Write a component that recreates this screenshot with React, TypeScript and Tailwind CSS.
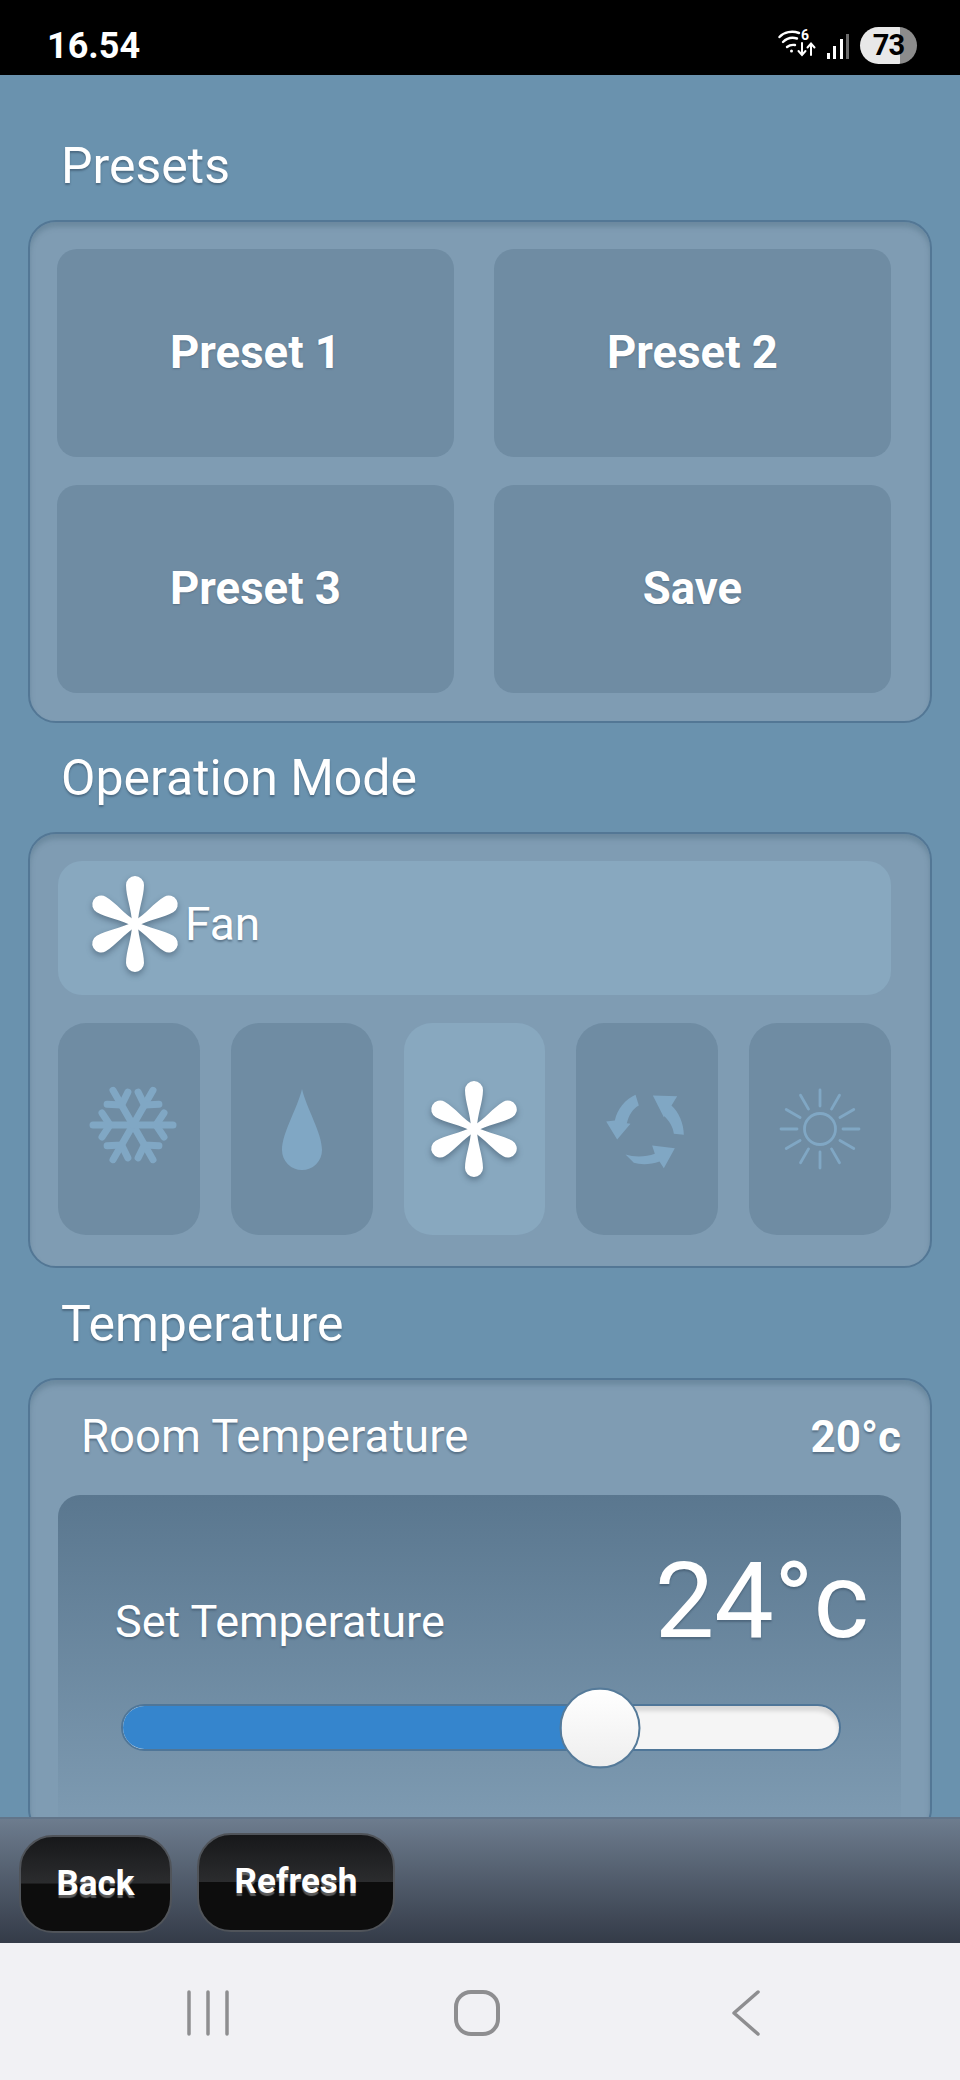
const value = 24;
const minTemp = 16;
const maxTemp = 28;

const headingClass =
  "mb-[26px] pl-[61px] text-[50px] leading-[55px] text-white [text-shadow:0_2px_2px_rgba(40,60,80,0.45)]";
const panelClass =
  "mx-[28px] rounded-[28px] border-2 border-[#537795] bg-[#7f9cb3] shadow-[inset_0_5px_5px_rgba(85,115,135,0.45)]";

function FanIcon() {
  return (
    <svg width="100" height="100" viewBox="-50 -50 100 100" className="drop-shadow-[0_3px_3px_rgba(40,60,80,0.45)]">
      {[0, 60, 120, 180, 240, 300].map((angle) => (
        <path
          key={angle}
          transform={`rotate(${angle})`}
          d="M-3 0 C-3 -14 -9 -27 -9 -39 A9 9 0 0 1 9 -39 C9 -27 3 -14 3 0 Z"
          fill="#fff"
        />
      ))}
      <circle r="5" fill="#fff" />
    </svg>
  );
}

function SnowflakeIcon() {
  return (
    <svg width="100" height="100" viewBox="-54 -46 100 100" fill="none" stroke="#80a7c4" strokeWidth="7" strokeLinecap="round">
      {[0, 60, 120, 180, 240, 300].map((angle) => (
        <g key={angle} transform={`rotate(${angle})`}>
          <path d="M0 0 L40 0" />
          <path d="M23 0 L31 -12 M23 0 L31 12" />
        </g>
      ))}
    </svg>
  );
}

function DropIcon() {
  return (
    <svg width="40" height="81" viewBox="0 0 40 81">
      <path d="M20 0 C24 18 40 44 40 61 A20 20 0 0 1 0 61 C0 44 16 18 20 0 Z" fill="#80a7c4" />
    </svg>
  );
}

function CycleIcon() {
  return (
    <svg width="105" height="105" viewBox="-1.500 4.500 315 315" fill="#80a7c4">
      <path d="M265 178 L235 175 C233 155 222 137 207 122 L205 125 L172 60 L245 62 L228 90 C250 110 265 145 265 178 Z" />
      <path d="M120 58 L130 90 C112 100 100 118 94 143 L105 145 L65 192 L32 138 L58 135 C65 100 90 72 120 58 Z" />
      <path d="M90 237 C115 245 150 245 178 235 L170 210 L238 218 L205 278 L192 258 C165 268 135 268 115 262 Z" />
    </svg>
  );
}

function SunIcon() {
  return (
    <svg width="84" height="84" viewBox="-42 -42 84 84" fill="none" stroke="#80a7c4" strokeLinecap="round">
      <circle r="15.500" strokeWidth="2.800" />
      {[0, 30, 60, 90, 120, 150, 180, 210, 240, 270, 300, 330].map((angle) => (
        <path key={angle} transform={`rotate(${angle})`} d="M0 -23 L0 -39" strokeWidth="2.800" />
      ))}
    </svg>
  );
}

function WifiIcon() {
  return (
    <svg width="40" height="36" viewBox="0 0 40 36" fill="none" stroke="#fff" strokeLinecap="round">
      <path d="M1.500 9 C6 4 14 2.500 21 5" strokeWidth="2.400" />
      <path d="M5 14 C9 10 14 9 19 10.500" strokeWidth="2.400" />
      <path d="M9 19 C11.500 17 14 16.500 17 17" strokeWidth="2.400" />
      <circle cx="13.500" cy="23" r="1.500" fill="#fff" stroke="none" />
      <text x="23" y="12" fontSize="14" fontWeight="700" fontFamily="Roboto, sans-serif" fill="#fff" stroke="none">6</text>
      <path d="M24 15 V26 M20.500 23 L24 27 L27.500 23" strokeWidth="2" />
      <path d="M33 27 V16 M29.500 19.500 L33 15.500 L36.500 19.500" strokeWidth="2" />
    </svg>
  );
}

function SignalIcon() {
  return (
    <div className="flex h-[26px] items-end gap-[3.500px]">
      <div className="h-[6px] w-[3px] bg-white" />
      <div className="h-[13px] w-[3px] bg-white" />
      <div className="h-[20px] w-[3px] bg-white" />
      <div className="h-[25px] w-[3px] bg-[#6b6b6b]" />
    </div>
  );
}

function StatusBar() {
  return (
    <div className="flex h-[75px] shrink-0 items-center justify-between bg-black pl-[47px] pr-[43px] pt-[16px] font-['Roboto',sans-serif] text-white">
      <span className="text-[36px] font-bold leading-none">16.54</span>
      <div className="flex items-center">
        <WifiIcon />
        <div className="ml-[9px] mr-[11px]">
          <SignalIcon />
        </div>
        <div className="flex h-[37px] w-[57px] items-center justify-center rounded-full bg-[linear-gradient(90deg,#e8e8e8_0%,#e8e8e8_71%,#8c8c8c_71%,#8c8c8c_100%)] text-[29px] font-bold tracking-[-1px] text-black">
          73
        </div>
      </div>
    </div>
  );
}

function PresetsPanel() {
  const labels = ["Preset 1", "Preset 2", "Preset 3", "Save"];
  return (
    <div className={`${panelClass} grid grid-cols-2 gap-x-[40px] gap-y-[28px] pb-[28px] pl-[27px] pr-[39px] pt-[27px]`}>
      {labels.map((label) => (
        <button
          key={label}
          className="flex h-[208px] items-center justify-center rounded-[20px] bg-[#6f8ca3] text-[45.500px] font-bold text-white [text-shadow:0_1px_2px_rgba(40,60,80,0.35)]"
        >
          {label}
        </button>
      ))}
    </div>
  );
}

function ModePanel() {
  const modes = [
    { key: "cool", icon: <SnowflakeIcon />, active: false },
    { key: "dry", icon: <DropIcon />, active: false },
    { key: "fan", icon: <FanIcon />, active: true },
    { key: "auto", icon: <CycleIcon />, active: false },
    { key: "heat", icon: <SunIcon />, active: false },
  ];
  return (
    <div className={`${panelClass} pb-[31px] pl-[28px] pr-[39px] pt-[27px]`}>
      <div className="flex h-[134px] items-center rounded-[24px] bg-[#88a8bf] pb-[8px] pl-[27px] text-[46px] text-white [text-shadow:0_2px_2px_rgba(40,60,80,0.45)]">
        <FanIcon />
        <span>Fan</span>
      </div>
      <div className="mt-[28px] grid grid-cols-5 gap-[31px]">
        {modes.map((mode) => (
          <button
            key={mode.key}
            className={
              mode.active
                ? "flex h-[212px] items-center justify-center rounded-[28px] bg-[#88a8bf]"
                : "flex h-[212px] items-center justify-center rounded-[28px] bg-[#6f8ca3]"
            }
          >
            {mode.icon}
          </button>
        ))}
      </div>
    </div>
  );
}

function TemperaturePanel() {
  const percent = ((value - minTemp) / (maxTemp - minTemp)) * 100;
  return (
    <div className={`${panelClass} pl-[28px] pr-[29px] pt-[31px] text-white`}>
      <div className="flex items-center justify-between pl-[23px] text-[45.500px] leading-[52px] [text-shadow:0_2px_2px_rgba(40,60,80,0.45)]">
        <span>Room Temperature</span>
        <span className="text-[44px] font-bold">20°c</span>
      </div>
      <div className="mt-[32px] h-[340px] rounded-[22px] bg-[linear-gradient(180deg,#5a778f_0%,#7f9cb3_100%)] pl-[57px] pr-[32px] pt-[47px]">
        <div className="flex items-baseline justify-between [text-shadow:0_2px_2px_rgba(40,60,80,0.4)]">
          <span className="text-[45px]">Set Temperature</span>
          <span className="text-[106px] leading-[118px]">24°c</span>
        </div>
        <div className="relative ml-[6px] mr-[28px] mt-[44px] flex h-[47px] overflow-visible rounded-full border-2 border-[#4f7698] bg-[#f5f5f5] shadow-[inset_0_5px_4px_rgba(0,0,0,0.12)]">
          <div className="h-full rounded-l-full bg-[#3585cd]" style={{ width: `${percent}%` }} />
          <div
            className="absolute top-1/2 h-[81px] w-[81px] -translate-x-1/2 -translate-y-1/2 rounded-full border-2 border-[#557a99] bg-[linear-gradient(180deg,#ffffff_0%,#eeeeee_100%)]"
            style={{ left: `${percent}%` }}
          />
        </div>
      </div>
    </div>
  );
}

function Toolbar() {
  const buttonClass =
    "rounded-[34px] border-2 border-[#50545a] bg-[linear-gradient(180deg,#17181a_0%,#2b2c2e_49%,#0d0d0d_50%,#0d0d0d_100%)] text-[35px] font-bold text-white [text-shadow:0_3px_1px_rgba(110,110,110,0.8)]";
  return (
    <div className="relative flex h-[126px] shrink-0 items-start gap-[25px] border-t-2 border-[#62758a] bg-[linear-gradient(180deg,#6d7c8e_0%,#343b48_100%)] pl-[19px]">
      <button className={`${buttonClass} mt-[16px] h-[98px] w-[153px]`}>Back</button>
      <button className={`${buttonClass} mt-[14px] h-[99px] w-[198px]`}>Refresh</button>
    </div>
  );
}

function NavBar() {
  return (
    <div className="flex h-[137px] shrink-0 items-start justify-center bg-[#f1f1f4] pr-[6px] pt-[47px]">
      <div className="flex w-[269px] justify-center">
        <svg width="44" height="46" viewBox="0 0 44 46" stroke="#8e8e90" strokeWidth="3.500" strokeLinecap="round">
          <path d="M3 2 V44 M22 2 V44 M41 2 V44" />
        </svg>
      </div>
      <div className="flex w-[269px] justify-center">
        <svg width="46" height="46" viewBox="0 0 46 46" fill="none">
          <rect x="2" y="2" width="42" height="42" rx="15" stroke="#8e8e90" strokeWidth="4" />
        </svg>
      </div>
      <div className="flex w-[269px] justify-center">
        <svg width="30" height="46" viewBox="0 0 30 46" fill="none" stroke="#8e8e90" strokeWidth="3.500" strokeLinecap="round" strokeLinejoin="round">
          <path d="M27 2 L3 23 L27 44" />
        </svg>
      </div>
    </div>
  );
}

export default function App() {
  return (
    <div className="flex h-[2080px] w-[960px] flex-col overflow-hidden bg-[#6a92ae] font-['Roboto',sans-serif]">
      <StatusBar />
      <main className="min-h-0 flex-1 overflow-hidden">
        <h2 className={`${headingClass} mt-[64px]`}>Presets</h2>
        <PresetsPanel />
        <h2 className={`${headingClass} mt-[28px]`}>Operation Mode</h2>
        <ModePanel />
        <h2 className={`${headingClass} mt-[29px]`}>Temperature</h2>
        <TemperaturePanel />
      </main>
      <Toolbar />
      <NavBar />
    </div>
  );
}
